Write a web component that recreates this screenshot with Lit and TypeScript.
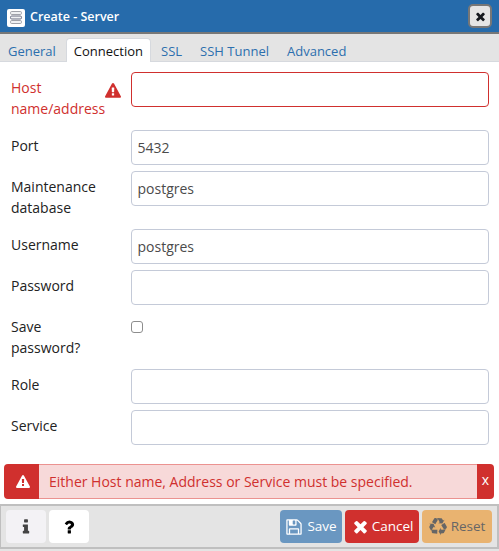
import { LitElement, html, css, svg, nothing } from "lit";
import { customElement, property } from "lit/decorators.js";
import { classMap } from "lit/directives/class-map.js";

const ICONS: Record<string, string> = {
  times:
    "M1490 1322q0 40-28 68l-136 136q-28 28-68 28t-68-28l-294-294-294 294q-28 28-68 28t-68-28l-136-136q-28-28-28-68t28-68l294-294-294-294q-28-28-28-68t28-68l136-136q28-28 68-28t68 28l294 294 294-294q28-28 68-28t68 28l136 136q28 28 28 68t-28 68l-294 294 294 294q28 28 28 68z",
  info:
    "M1216 1344v128q0 26-19 45t-45 19h-512q-26 0-45-19t-19-45v-128q0-26 19-45t45-19h64v-384h-64q-26 0-45-19t-19-45v-128q0-26 19-45t45-19h384q26 0 45 19t19 45v576h64q26 0 45 19t19 45zm-128-1152v192q0 26-19 45t-45 19h-256q-26 0-45-19t-19-45v-192q0-26 19-45t45-19h256q26 0 45 19t19 45z",
  question:
    "M1088 1256v240q0 16-12 28t-28 12h-240q-16 0-28-12t-12-28v-240q0-16 12-28t28-12h240q16 0 28 12t12 28zm316-600q0 54-15.5 101t-35 76.5-55 59.5-57.5 43.5-61 35.5q-41 23-68.5 65t-27.5 67q0 17-12 32.5t-28 15.5h-240q-15 0-25.5-18.5t-10.5-37.5v-45q0-83 65-156.5t143-108.5q59-27 84-56t25-76q0-42-46.5-74t-107.5-32q-65 0-108 29-35 25-107 115-13 16-31 16-12 0-25-8l-164-125q-13-10-15.5-25t5.5-28q160-266 464-266 80 0 161 31t146 83 106 127.5 41 158.5z",
  warning:
    "M1024 1375v-190q0-14-9.5-23.5t-22.5-9.5h-192q-13 0-22.5 9.5t-9.5 23.5v190q0 14 9.5 23.5t22.5 9.5h192q13 0 22.5-9.5t9.5-23.5zm-2-374l18-459q0-12-10-19-13-11-24-11h-220q-11 0-24 11-10 7-10 21l17 457q0 10 10 16.5t24 6.5h185q14 0 23.5-6.5t10.5-16.5zm-14-934l768 1408q35 63-2 126-17 29-46.5 46t-63.5 17h-1536q-34 0-63.5-17t-46.5-46q-37-63-2-126l768-1408q17-31 47-49t65-18 65 18 47 49z",
  save:
    "M512 1536h768v-384h-768v384zm896 0h128v-896q0-14-10-38.5t-20-34.5l-281-281q-10-10-34-20t-39-10v416q0 40-28 68t-68 28h-576q-40 0-68-28t-28-68v-416h-128v1280h128v-416q0-40 28-68t68-28h832q40 0 68 28t28 68v416zm-384-928v-320q0-13-9.5-22.5t-22.5-9.5h-192q-13 0-22.5 9.5t-9.5 22.5v320q0 13 9.5 22.5t22.5 9.5h192q13 0 22.5-9.5t9.5-22.5zm640 32v928q0 40-28 68t-68 28h-1344q-40 0-68-28t-28-68v-1344q0-40 28-68t68-28h928q40 0 88 20t76 48l280 280q28 28 48 76t20 88z",
  recycle:
    "M836 1169l-15 368-2 22-420-29q-36-3-67-31.5t-47-65.5q-11-27-14.5-55t4-65 12-55 21.5-64 19-53q78 12 509 28zm-387-586l180 379-147-92q-63 72-111.5 144.5t-72.5 125-39.5 94.5-18.5 63l-4 21-190-357q-17-26-18-56t6-47l8-18q35-63 114-188l-140-86zm1231 517l-188 359q-12 29-36.5 46.5t-43.5 20.5l-18 4q-71 7-219 12l8 164-230-367 211-362 7 173q170 16 283 5t170-33zm-785-924q-47 63-265 435l-317-187-19-12 225-356q20-31 60-45t80-10q24 2 48.5 12t42 21 41.5 33 36 34.5 36 39.5 32 35zm655 307l212 363q18 37 12.5 76t-27.5 74q-13 20-33 37t-38 28-48.5 22-47 16-51.5 14-46 12q-34-72-265-436l313-195zm-143-226l142-83-220 373-419-20 151-86q-34-89-75-166t-75.5-123.5-64.5-80-47-46.5l-17-13 405 1q31-3 58 10.5t39 28.5l11 15q39 61 112 190z",
};

@customElement("fa-icon")
export class FaIcon extends LitElement {
  @property() name = "";

  static styles = css`
    :host {
      display: block;
      flex: none;
      width: 18px;
      height: 18px;
    }
    .glyph {
      display: block;
      width: 100%;
      height: 100%;
      fill: currentColor;
    }
  `;

  render() {
    return html`<svg class="glyph" viewBox="0 0 1792 1792">${svg`<path d=${ICONS[this.name]}></path>`}</svg>`;
  }
}

interface Field {
  label: string;
  value?: string;
  error?: boolean;
  checkbox?: boolean;
}

const TABS = ["General", "Connection", "SSL", "SSH Tunnel", "Advanced"];

const FIELDS: Field[] = [
  { label: "Host name/address", error: true },
  { label: "Port", value: "5432" },
  { label: "Maintenance database", value: "postgres" },
  { label: "Username", value: "postgres" },
  { label: "Password" },
  { label: "Save password?", checkbox: true },
  { label: "Role" },
  { label: "Service" },
];

@customElement("app-root")
export class AppRoot extends LitElement {
  @property() active = "Connection";

  static styles = css`
    :host {
      display: flex;
      flex-direction: column;
      box-sizing: border-box;
      width: 499px;
      height: 551px;
      overflow: hidden;
      background: #fff;
      color: #222;
      font: 14px/21px "Open Sans", "Noto Sans", sans-serif;
    }
    * {
      box-sizing: border-box;
    }
    button,
    input {
      font: inherit;
      margin: 0;
    }
    .header {
      display: flex;
      align-items: center;
      height: 34px;
      padding: 0 7px;
      background: #266bab;
      border-bottom: 2px solid #777;
      color: #fff;
    }
    .server {
      width: 18px;
      height: 18px;
      margin: 4px 5px 0 0;
      flex: none;
    }
    .title {
      flex: 1;
      font-size: 12.5px;
      font-weight: 600;
    }
    .close {
      display: flex;
      align-items: center;
      justify-content: center;
      width: 24px;
      height: 24px;
      padding: 0;
      border: 2px solid #777;
      border-radius: 5px;
      background: #e5e5e5;
      color: #16191f;
    }
    .close fa-icon {
      width: 13px;
      height: 13px;
    }
    .tabs {
      display: flex;
      align-items: flex-end;
      height: 28px;
      flex: none;
      background: #e4e4e4;
      border-bottom: 1px solid #d6d9de;
    }
    .tab {
      height: 24px;
      margin-bottom: -1px;
      padding: 2px 7px 0;
      border: 1px solid transparent;
      border-bottom: 0;
      border-radius: 4px 4px 0 0;
      color: #2c6fae;
      font-size: 13px;
      white-space: nowrap;
    }
    .tab + .tab {
      margin-left: 2px;
    }
    .tab.active {
      background: #fff;
      border-color: #d6d9de;
      color: #111;
    }
    .form {
      display: flex;
      flex-direction: column;
      flex: none;
      padding: 10px 10px 0 11px;
      height: 402px;
    }
    .row {
      display: grid;
      grid-template-columns: 94px 26px 1fr;
      align-items: start;
      padding-bottom: 6px;
      min-height: 41px;
    }
    .label {
      padding: 5px 0 5px;
      min-width: 0;
    }
    .row.tall {
      min-height: 58px;
    }
    .row.error .label,
    .mark {
      color: #d0302e;
    }
    .mark {
      width: 16px;
      height: 16px;
      margin-top: 11px;
    }
    .field {
      grid-column: 3;
      width: 100%;
      height: 35px;
      padding: 0 5.5px;
      border: 1px solid #c4cad8;
      border-radius: 4px;
      background: #fff;
      color: #4b4b4b;
      outline: 0;
    }
    .row.error .field {
      border-color: #d0302e;
    }
    .check {
      grid-column: 3;
      appearance: none;
      width: 12px;
      height: 12px;
      margin-top: 10px;
      border: 1px solid #8d8d8d;
      border-radius: 3px;
      background: #fff;
    }
    .alert {
      display: flex;
      flex: none;
      height: 35px;
      margin: 0 5px 5px 4px;
      border-radius: 4px;
      overflow: hidden;
      background: #d0302e;
      color: #fff;
    }
    .alert-icon {
      display: flex;
      align-items: center;
      justify-content: center;
      width: 35px;
    }
    .alert-icon fa-icon {
      width: 14px;
      height: 14px;
      margin: 1px 0 0 2px;
    }
    .message {
      flex: 1;
      padding: 6px 10px;
      border: 1px solid #eb9290;
      border-width: 1px 0;
      background: #f7d9d9;
      color: #d0302e;
      white-space: nowrap;
    }
    .dismiss {
      width: 17px;
      padding: 0 0 4px;
      border: 0;
      background: none;
      color: #fff;
      font-size: 14px;
    }
    .footer {
      display: flex;
      flex: none;
      gap: 3px;
      height: 45px;
      padding: 4px 5px 4px;
      border: 2px solid #bfbfbf;
      border-left-width: 1px;
      background: #e4e4e4;
    }
    .base {
      flex: 1;
      background: #e4e4e4;
    }
    .btn {
      display: flex;
      align-items: center;
      justify-content: center;
      gap: 4px;
      height: 33px;
      padding: 0;
      border: 0;
      border-radius: 4px;
      font-size: 13.5px;
      white-space: nowrap;
    }
    .square {
      width: 40px;
      background: #fff;
      color: #000;
    }
    .muted {
      background: #f3f2f5;
      color: #444;
    }
    .spacer {
      flex: 1;
    }
    .save {
      width: 62px;
      background: #6a97c1;
      color: #fff;
    }
    .cancel {
      gap: 2px;
      width: 74px;
      background: #d0302e;
      color: #fff;
    }
    .cancel fa-icon {
      width: 19px;
      height: 19px;
    }
    .reset {
      width: 70px;
      background: #e9b370;
      color: #666;
    }
  `;

  private renderField(f: Field) {
    const tall = f.label.includes(" ");
    return html`
      <div class=${classMap({ row: true, tall, error: !!f.error })}>
        <label class="label">${f.label}</label>
        ${f.error ? html`<fa-icon class="mark" name="warning"></fa-icon>` : nothing}
        ${f.checkbox
          ? html`<input class="check" type="checkbox" />`
          : html`<input class="field" type="text" .value=${f.value ?? ""} />`}
      </div>
    `;
  }

  render() {
    return html`
      <div class="header">
        <svg class="server" viewBox="0 0 18 18">
          <rect width="18" height="18" rx="2" fill="#fff" />
          <g fill="#f0f1f3" stroke="#a0a2a9">
            <rect x="3.5" y="2.5" width="11" height="3" rx="1.2" />
            <rect x="3.5" y="11.5" width="11" height="3" rx="1.2" />
            <rect x="3.5" y="7" width="11" height="3" rx="1.2" stroke="#686c80" />
          </g>
        </svg>
        <div class="title">Create - Server</div>
        <button class="close"><fa-icon name="times"></fa-icon></button>
      </div>
      <div class="tabs">
        ${TABS.map(
          (t) => html`<div class=${classMap({ tab: true, active: t === this.active })}>${t}</div>`
        )}
      </div>
      <div class="form">${FIELDS.map((f) => this.renderField(f))}</div>
      <div class="alert">
        <div class="alert-icon"><fa-icon name="warning"></fa-icon></div>
        <div class="message">Either Host name, Address or Service must be specified.</div>
        <button class="dismiss">x</button>
      </div>
      <div class="footer">
        <button class="btn square muted"><fa-icon name="info"></fa-icon></button>
        <button class="btn square"><fa-icon name="question"></fa-icon></button>
        <div class="spacer"></div>
        <button class="btn save"><fa-icon name="save"></fa-icon>Save</button>
        <button class="btn cancel"><fa-icon name="times"></fa-icon>Cancel</button>
        <button class="btn reset"><fa-icon name="recycle"></fa-icon>Reset</button>
      </div>
      <div class="base"></div>
    `;
  }
}
